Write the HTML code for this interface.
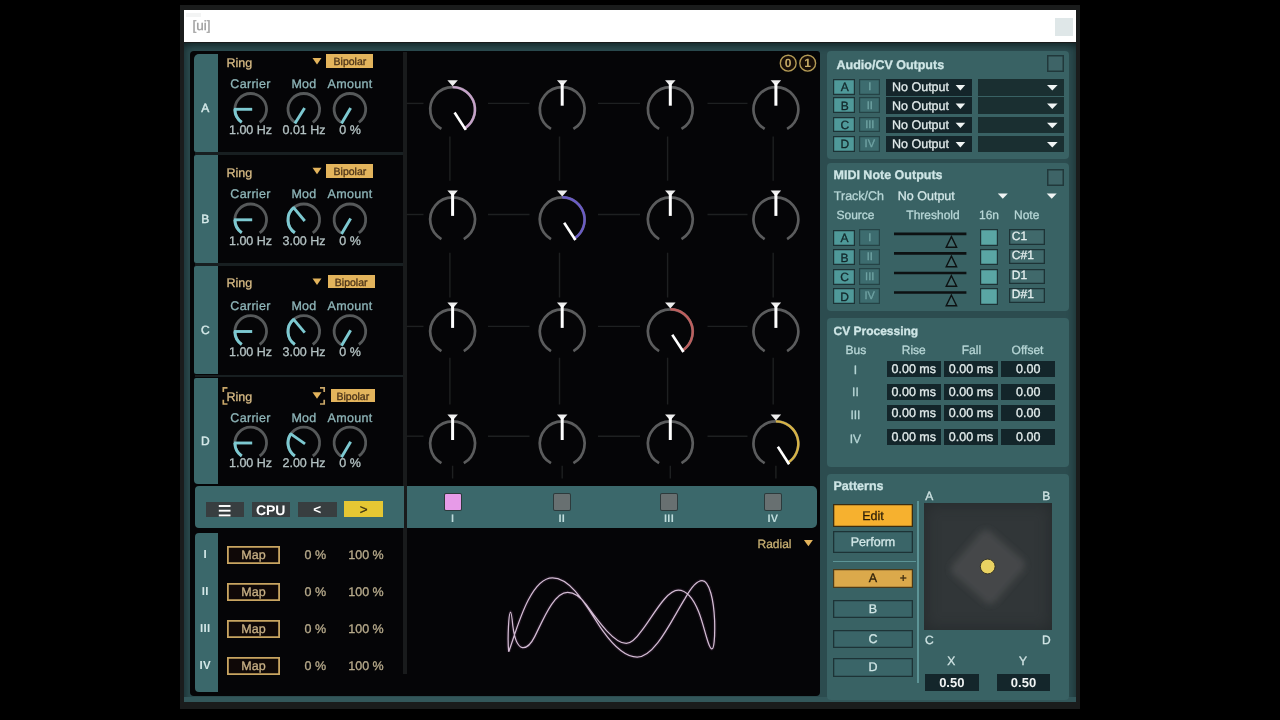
<!DOCTYPE html>
<html><head><meta charset="utf-8"><title>ui</title>
<style>
html,body{margin:0;padding:0;background:#000;}
body{width:1280px;height:720px;position:relative;overflow:hidden;font-family:"Liberation Sans",sans-serif;}
#r div,#r span{position:absolute;display:block;box-sizing:border-box;white-space:nowrap;}
#r svg{position:absolute;left:0;top:0;pointer-events:none;}
#r span{-webkit-text-stroke:0.3px currentColor;-webkit-font-smoothing:antialiased;text-rendering:geometricPrecision;}
#tx{position:absolute;left:0;top:0;width:1280px;height:720px;will-change:transform;transform:translateZ(0);}
</style></head><body><div id="r">
<div style="left:180.0px;top:5.0px;width:900.0px;height:704.0px;background:#1a1c1c;"></div>
<div style="left:184.0px;top:10.0px;width:892.0px;height:32.0px;background:#ffffff;"></div>
<div style="left:1055.0px;top:18.0px;width:18.0px;height:18.0px;background:#dfe7e8;"></div>
<div style="left:186.3px;top:13.1px;width:14.3px;height:4.4px;background:#f3f4f4;"></div>
<div style="left:184.0px;top:43.0px;width:892.0px;height:658.5px;background:#2c4c4f;box-shadow:inset 0 7px 6px -4px rgba(10,20,22,0.6), inset 7px 0 6px -4px rgba(10,20,22,0.35), inset -7px 0 6px -4px rgba(10,20,22,0.3);"></div>
<div style="left:184.0px;top:696.5px;width:892.0px;height:5.0px;background:#33575a;"></div>
<div style="left:189.6px;top:51.1px;width:630.6px;height:644.6px;background:#050507;border-radius:4px 3px 4px 4px;"></div>
<div style="left:403.0px;top:52.0px;width:3.6px;height:622.0px;background:#191b1c;"></div>
<div style="left:194.2px;top:54.2px;width:23.8px;height:97.8px;background:#3b686b;border-radius:5px 0 0 2px;"></div>
<div style="left:326.4px;top:54.2px;width:47.0px;height:13.6px;background:#e3b45c;"></div>
<div style="left:194.2px;top:155.2px;width:23.8px;height:107.8px;background:#3b686b;border-radius:2px 0 0 2px;"></div>
<div style="left:194.5px;top:152.2px;width:208.5px;height:2.8px;background:#181f21;"></div>
<div style="left:326.4px;top:164.0px;width:47.0px;height:13.6px;background:#e3b45c;"></div>
<div style="left:194.2px;top:266.2px;width:23.8px;height:108.3px;background:#3b686b;border-radius:2px 0 0 2px;"></div>
<div style="left:194.5px;top:263.2px;width:208.5px;height:2.8px;background:#181f21;"></div>
<div style="left:327.7px;top:274.7px;width:47.0px;height:13.6px;background:#e3b45c;"></div>
<div style="left:194.2px;top:377.7px;width:23.8px;height:106.3px;background:#3b686b;border-radius:2px 0 0 4px;"></div>
<div style="left:194.5px;top:374.7px;width:208.5px;height:2.8px;background:#181f21;"></div>
<div style="left:330.9px;top:388.9px;width:43.8px;height:13.6px;background:#e3b45c;"></div>
<div style="left:194.5px;top:486.2px;width:209.0px;height:41.4px;background:#3b686b;border-radius:4px 0 0 4px;"></div>
<div style="left:406.6px;top:485.8px;width:410.8px;height:41.8px;background:#3b686b;border-radius:0 5px 5px 0;"></div>
<div style="left:206.3px;top:501.7px;width:37.5px;height:15.6px;background:#383e40;"></div>
<div style="left:251.7px;top:501.7px;width:38.3px;height:15.6px;background:#383e40;"></div>
<div style="left:298.0px;top:501.7px;width:38.6px;height:15.6px;background:#383e40;"></div>
<div style="left:344.0px;top:500.9px;width:39.3px;height:16.4px;background:#e6c733;"></div>
<div style="left:444.9px;top:494.0px;width:15.8px;height:15.6px;background:#e79be8;box-shadow:0 0 0 1px #2d3a3c;border-radius:1px;"></div>
<div style="left:553.9px;top:494.0px;width:15.8px;height:15.6px;background:#687071;box-shadow:0 0 0 1px #2d3a3c;border-radius:1px;"></div>
<div style="left:661.1px;top:494.0px;width:15.8px;height:15.6px;background:#687071;box-shadow:0 0 0 1px #2d3a3c;border-radius:1px;"></div>
<div style="left:765.1px;top:494.0px;width:15.8px;height:15.6px;background:#687071;box-shadow:0 0 0 1px #2d3a3c;border-radius:1px;"></div>
<div style="left:194.5px;top:533.2px;width:23.5px;height:159.0px;background:#3b686b;border-radius:4px 0 0 4px;"></div>
<div style="left:227.3px;top:546.3px;width:52.5px;height:17.8px;background:#0f0807;box-shadow:inset 0 0 0 1.8px #c9a561;"></div>
<div style="left:227.3px;top:583.3px;width:52.5px;height:17.8px;background:#0f0807;box-shadow:inset 0 0 0 1.8px #c9a561;"></div>
<div style="left:227.3px;top:620.3px;width:52.5px;height:17.8px;background:#0f0807;box-shadow:inset 0 0 0 1.8px #c9a561;"></div>
<div style="left:227.3px;top:657.3px;width:52.5px;height:17.8px;background:#0f0807;box-shadow:inset 0 0 0 1.8px #c9a561;"></div>
<div style="left:827.3px;top:51.0px;width:242.2px;height:107.7px;background:#396264;border-radius:4px;"></div>
<div style="left:827.3px;top:163.4px;width:242.2px;height:148.1px;background:#396264;border-radius:4px;"></div>
<div style="left:827.3px;top:318.3px;width:242.2px;height:148.3px;background:#396264;border-radius:4px;"></div>
<div style="left:827.3px;top:473.6px;width:242.2px;height:226.9px;background:#396264;border-radius:4px;"></div>
<div style="left:1047.0px;top:55.0px;width:16.8px;height:16.8px;background:#3e6467;box-shadow:inset 0 0 0 1.5px #21383b;"></div>
<div style="left:833.3px;top:78.9px;width:21.8px;height:15.8px;background:#4f9999;box-shadow:inset 0 0 0 1.2px #1d3336;"></div>
<div style="left:859.2px;top:78.9px;width:21.1px;height:15.8px;background:#3d6c6f;box-shadow:inset 0 0 0 1.2px #254346;"></div>
<div style="left:886.0px;top:78.8px;width:86.0px;height:17.6px;background:#14252a;"></div>
<div style="left:978.0px;top:78.8px;width:85.7px;height:17.6px;background:#1a2f31;"></div>
<div style="left:833.3px;top:97.4px;width:21.8px;height:15.8px;background:#4f9999;box-shadow:inset 0 0 0 1.2px #1d3336;"></div>
<div style="left:859.2px;top:97.4px;width:21.1px;height:15.8px;background:#3d6c6f;box-shadow:inset 0 0 0 1.2px #254346;"></div>
<div style="left:886.0px;top:97.3px;width:86.0px;height:16.8px;background:#14252a;"></div>
<div style="left:978.0px;top:97.3px;width:85.7px;height:16.8px;background:#1a2f31;"></div>
<div style="left:833.3px;top:116.6px;width:21.8px;height:15.8px;background:#4f9999;box-shadow:inset 0 0 0 1.2px #1d3336;"></div>
<div style="left:859.2px;top:116.6px;width:21.1px;height:15.8px;background:#3d6c6f;box-shadow:inset 0 0 0 1.2px #254346;"></div>
<div style="left:886.0px;top:116.5px;width:86.0px;height:16.3px;background:#14252a;"></div>
<div style="left:978.0px;top:116.5px;width:85.7px;height:16.3px;background:#1a2f31;"></div>
<div style="left:833.3px;top:135.9px;width:21.8px;height:15.8px;background:#4f9999;box-shadow:inset 0 0 0 1.2px #1d3336;"></div>
<div style="left:859.2px;top:135.9px;width:21.1px;height:15.8px;background:#3d6c6f;box-shadow:inset 0 0 0 1.2px #254346;"></div>
<div style="left:886.0px;top:135.8px;width:86.0px;height:16.4px;background:#14252a;"></div>
<div style="left:978.0px;top:135.8px;width:85.7px;height:16.4px;background:#1a2f31;"></div>
<div style="left:1047.0px;top:169.2px;width:16.8px;height:16.8px;background:#3e6467;box-shadow:inset 0 0 0 1.5px #21383b;"></div>
<div style="left:833.3px;top:229.5px;width:22.0px;height:16.2px;background:#4f9999;box-shadow:inset 0 0 0 1.2px #1d3336;"></div>
<div style="left:858.9px;top:229.2px;width:21.3px;height:16.5px;background:#3d6c6f;box-shadow:inset 0 0 0 1.2px #254346;"></div>
<div style="left:980.4px;top:229.4px;width:17.4px;height:16.6px;background:#5aa6a4;box-shadow:inset 0 0 0 1.2px #1d3336;"></div>
<div style="left:1008.9px;top:229.4px;width:35.8px;height:15.4px;background:#40696b;box-shadow:inset 0 0 0 1.3px #1d3336;"></div>
<div style="left:833.3px;top:249.0px;width:22.0px;height:16.2px;background:#4f9999;box-shadow:inset 0 0 0 1.2px #1d3336;"></div>
<div style="left:858.9px;top:248.7px;width:21.3px;height:16.5px;background:#3d6c6f;box-shadow:inset 0 0 0 1.2px #254346;"></div>
<div style="left:980.4px;top:248.9px;width:17.4px;height:16.6px;background:#5aa6a4;box-shadow:inset 0 0 0 1.2px #1d3336;"></div>
<div style="left:1008.9px;top:248.9px;width:35.8px;height:15.4px;background:#40696b;box-shadow:inset 0 0 0 1.3px #1d3336;"></div>
<div style="left:833.3px;top:268.6px;width:22.0px;height:16.2px;background:#4f9999;box-shadow:inset 0 0 0 1.2px #1d3336;"></div>
<div style="left:858.9px;top:268.3px;width:21.3px;height:16.5px;background:#3d6c6f;box-shadow:inset 0 0 0 1.2px #254346;"></div>
<div style="left:980.4px;top:268.5px;width:17.4px;height:16.6px;background:#5aa6a4;box-shadow:inset 0 0 0 1.2px #1d3336;"></div>
<div style="left:1008.9px;top:268.5px;width:35.8px;height:15.4px;background:#40696b;box-shadow:inset 0 0 0 1.3px #1d3336;"></div>
<div style="left:833.3px;top:288.1px;width:22.0px;height:16.2px;background:#4f9999;box-shadow:inset 0 0 0 1.2px #1d3336;"></div>
<div style="left:858.9px;top:287.8px;width:21.3px;height:16.5px;background:#3d6c6f;box-shadow:inset 0 0 0 1.2px #254346;"></div>
<div style="left:980.4px;top:288.0px;width:17.4px;height:16.6px;background:#5aa6a4;box-shadow:inset 0 0 0 1.2px #1d3336;"></div>
<div style="left:1008.9px;top:288.0px;width:35.8px;height:15.4px;background:#40696b;box-shadow:inset 0 0 0 1.3px #1d3336;"></div>
<div style="left:886.8px;top:361.0px;width:54.1px;height:16.0px;background:#13252a;"></div>
<div style="left:944.4px;top:361.0px;width:53.4px;height:16.0px;background:#13252a;"></div>
<div style="left:1001.1px;top:361.0px;width:54.1px;height:16.0px;background:#13252a;"></div>
<div style="left:886.8px;top:384.0px;width:54.1px;height:16.0px;background:#13252a;"></div>
<div style="left:944.4px;top:384.0px;width:53.4px;height:16.0px;background:#13252a;"></div>
<div style="left:1001.1px;top:384.0px;width:54.1px;height:16.0px;background:#13252a;"></div>
<div style="left:886.8px;top:405.0px;width:54.1px;height:16.0px;background:#13252a;"></div>
<div style="left:944.4px;top:405.0px;width:53.4px;height:16.0px;background:#13252a;"></div>
<div style="left:1001.1px;top:405.0px;width:54.1px;height:16.0px;background:#13252a;"></div>
<div style="left:886.8px;top:429.0px;width:54.1px;height:16.0px;background:#13252a;"></div>
<div style="left:944.4px;top:429.0px;width:53.4px;height:16.0px;background:#13252a;"></div>
<div style="left:1001.1px;top:429.0px;width:54.1px;height:16.0px;background:#13252a;"></div>
<div style="left:833.2px;top:504.2px;width:79.8px;height:22.5px;background:#f6b12f;box-shadow:inset 0 0 0 1.3px #3b2c10;"></div>
<div style="left:833.2px;top:531.3px;width:79.8px;height:21.5px;background:#3a6568;box-shadow:inset 0 0 0 1.3px #1d3336;"></div>
<div style="left:833.0px;top:560.6px;width:83.0px;height:1.7px;background:#5d9496;"></div>
<div style="left:917.3px;top:500.7px;width:1.8px;height:182.5px;background:#5d9496;"></div>
<div style="left:832.8px;top:569.0px;width:80.5px;height:18.5px;background:#dba94b;box-shadow:inset 0 0 0 1.2px #4b3a18;"></div>
<div style="left:832.8px;top:599.6px;width:80.5px;height:18.5px;background:#3a6568;box-shadow:inset 0 0 0 1.3px #1d3336;"></div>
<div style="left:832.8px;top:629.8px;width:80.5px;height:18.5px;background:#3a6568;box-shadow:inset 0 0 0 1.3px #1d3336;"></div>
<div style="left:832.8px;top:658.0px;width:80.5px;height:18.5px;background:#3a6568;box-shadow:inset 0 0 0 1.3px #1d3336;"></div>
<div style="left:924.2px;top:503.2px;width:127.7px;height:126.6px;background:#313638;box-shadow:inset 0 0 14px 2px rgba(30,34,36,0.55);"></div>
<div style="left:924.8px;top:673.6px;width:54.0px;height:17.4px;background:#14262b;"></div>
<div style="left:996.8px;top:673.6px;width:53.5px;height:17.4px;background:#14262b;"></div>
<svg width="1280" height="720" viewBox="0 0 1280 720">
<path d="M312.50,58.00 L321.50,58.00 L317.00,64.50 Z" fill="#e3b45c"/>
<path d="M241.75,122.32 A15.8,15.8 0 1 1 259.65,122.32" fill="none" stroke="#56595a" stroke-width="2.8" stroke-linecap="butt"/>
<path d="M294.85,122.32 A15.8,15.8 0 1 1 312.75,122.32" fill="none" stroke="#56595a" stroke-width="2.8" stroke-linecap="butt"/>
<path d="M340.95,122.32 A15.8,15.8 0 1 1 358.85,122.32" fill="none" stroke="#56595a" stroke-width="2.8" stroke-linecap="butt"/>
<path d="M241.75,122.32 A15.8,15.8 0 0 1 234.90,109.30" fill="none" stroke="#7dc9d1" stroke-width="3.0" stroke-linecap="butt"/>
<line x1="252.20" y1="109.30" x2="233.90" y2="109.30" stroke="#7dc9d1" stroke-width="2.9" stroke-linecap="butt"/>
<line x1="304.59" y1="108.03" x2="294.90" y2="123.55" stroke="#7dc9d1" stroke-width="2.9" stroke-linecap="butt"/>
<line x1="350.66" y1="108.01" x2="341.47" y2="123.60" stroke="#7dc9d1" stroke-width="2.9" stroke-linecap="butt"/>
<path d="M312.50,167.80 L321.50,167.80 L317.00,174.30 Z" fill="#e3b45c"/>
<path d="M241.75,232.82 A15.8,15.8 0 1 1 259.65,232.82" fill="none" stroke="#56595a" stroke-width="2.8" stroke-linecap="butt"/>
<path d="M294.85,232.82 A15.8,15.8 0 1 1 312.75,232.82" fill="none" stroke="#56595a" stroke-width="2.8" stroke-linecap="butt"/>
<path d="M340.95,232.82 A15.8,15.8 0 1 1 358.85,232.82" fill="none" stroke="#56595a" stroke-width="2.8" stroke-linecap="butt"/>
<path d="M241.75,232.82 A15.8,15.8 0 0 1 234.90,219.80" fill="none" stroke="#7dc9d1" stroke-width="3.0" stroke-linecap="butt"/>
<line x1="252.20" y1="219.80" x2="233.90" y2="219.80" stroke="#7dc9d1" stroke-width="2.9" stroke-linecap="butt"/>
<path d="M294.85,232.82 A15.8,15.8 0 0 1 293.64,207.70" fill="none" stroke="#7dc9d1" stroke-width="3.0" stroke-linecap="butt"/>
<line x1="304.76" y1="220.95" x2="293.00" y2="206.93" stroke="#7dc9d1" stroke-width="2.9" stroke-linecap="butt"/>
<line x1="350.66" y1="218.51" x2="341.47" y2="234.10" stroke="#7dc9d1" stroke-width="2.9" stroke-linecap="butt"/>
<path d="M312.50,278.50 L321.50,278.50 L317.00,285.00 Z" fill="#e3b45c"/>
<path d="M241.75,344.52 A15.8,15.8 0 1 1 259.65,344.52" fill="none" stroke="#56595a" stroke-width="2.8" stroke-linecap="butt"/>
<path d="M294.85,344.52 A15.8,15.8 0 1 1 312.75,344.52" fill="none" stroke="#56595a" stroke-width="2.8" stroke-linecap="butt"/>
<path d="M340.95,344.52 A15.8,15.8 0 1 1 358.85,344.52" fill="none" stroke="#56595a" stroke-width="2.8" stroke-linecap="butt"/>
<path d="M241.75,344.52 A15.8,15.8 0 0 1 234.90,331.50" fill="none" stroke="#7dc9d1" stroke-width="3.0" stroke-linecap="butt"/>
<line x1="252.20" y1="331.50" x2="233.90" y2="331.50" stroke="#7dc9d1" stroke-width="2.9" stroke-linecap="butt"/>
<path d="M294.85,344.52 A15.8,15.8 0 0 1 293.64,319.40" fill="none" stroke="#7dc9d1" stroke-width="3.0" stroke-linecap="butt"/>
<line x1="304.76" y1="332.65" x2="293.00" y2="318.63" stroke="#7dc9d1" stroke-width="2.9" stroke-linecap="butt"/>
<line x1="350.66" y1="330.21" x2="341.47" y2="345.80" stroke="#7dc9d1" stroke-width="2.9" stroke-linecap="butt"/>
<path d="M312.50,392.20 L321.50,392.20 L317.00,398.70 Z" fill="#e3b45c"/>
<path d="M241.75,456.02 A15.8,15.8 0 1 1 259.65,456.02" fill="none" stroke="#56595a" stroke-width="2.8" stroke-linecap="butt"/>
<path d="M294.85,456.02 A15.8,15.8 0 1 1 312.75,456.02" fill="none" stroke="#56595a" stroke-width="2.8" stroke-linecap="butt"/>
<path d="M340.95,456.02 A15.8,15.8 0 1 1 358.85,456.02" fill="none" stroke="#56595a" stroke-width="2.8" stroke-linecap="butt"/>
<path d="M241.75,456.02 A15.8,15.8 0 0 1 234.90,443.00" fill="none" stroke="#7dc9d1" stroke-width="3.0" stroke-linecap="butt"/>
<line x1="252.20" y1="443.00" x2="233.90" y2="443.00" stroke="#7dc9d1" stroke-width="2.9" stroke-linecap="butt"/>
<path d="M294.85,456.02 A15.8,15.8 0 0 1 290.86,433.94" fill="none" stroke="#7dc9d1" stroke-width="3.0" stroke-linecap="butt"/>
<line x1="305.03" y1="443.86" x2="290.04" y2="433.36" stroke="#7dc9d1" stroke-width="2.9" stroke-linecap="butt"/>
<line x1="350.66" y1="441.71" x2="341.47" y2="457.30" stroke="#7dc9d1" stroke-width="2.9" stroke-linecap="butt"/>
<path d="M227.5,387.8 L223.3,387.8 L223.3,392.0" fill="none" stroke="#c9a768" stroke-width="1.7"/>
<path d="M320.0,387.8 L324.2,387.8 L324.2,392.0" fill="none" stroke="#c9a768" stroke-width="1.7"/>
<path d="M227.5,404 L223.3,404 L223.3,399.8" fill="none" stroke="#c9a768" stroke-width="1.7"/>
<path d="M320.0,404 L324.2,404 L324.2,399.8" fill="none" stroke="#c9a768" stroke-width="1.7"/>
<line x1="406.60" y1="103.40" x2="423.50" y2="103.40" stroke="#1e2021" stroke-width="1.4" stroke-linecap="butt"/>
<line x1="488.00" y1="103.40" x2="529.50" y2="103.40" stroke="#1e2021" stroke-width="1.4" stroke-linecap="butt"/>
<line x1="598.00" y1="103.40" x2="640.00" y2="103.40" stroke="#1e2021" stroke-width="1.4" stroke-linecap="butt"/>
<line x1="707.50" y1="103.40" x2="747.50" y2="103.40" stroke="#1e2021" stroke-width="1.4" stroke-linecap="butt"/>
<line x1="449.90" y1="136.50" x2="449.90" y2="180.70" stroke="#1e2021" stroke-width="1.4" stroke-linecap="butt"/>
<path d="M441.40,128.90 A22.4,22.4 0 1 1 463.80,128.90" fill="none" stroke="#5b5c5d" stroke-width="2.7" stroke-linecap="butt"/>
<path d="M447.35,80.30 L457.85,80.30 L452.60,86.30 Z" fill="#ededed"/>
<path d="M452.60,87.10 A22.4,22.4 0 0 1 463.80,128.90" fill="none" stroke="#c5a2c8" stroke-width="2.4" stroke-linecap="butt"/>
<line x1="454.56" y1="112.52" x2="465.83" y2="129.88" stroke="#ffffff" stroke-width="2.6" stroke-linecap="butt"/>
<line x1="559.50" y1="136.50" x2="559.50" y2="180.70" stroke="#1e2021" stroke-width="1.4" stroke-linecap="butt"/>
<path d="M551.00,128.90 A22.4,22.4 0 1 1 573.40,128.90" fill="none" stroke="#5b5c5d" stroke-width="2.7" stroke-linecap="butt"/>
<path d="M556.95,80.30 L567.45,80.30 L562.20,86.30 Z" fill="#ededed"/>
<line x1="562.20" y1="83.00" x2="562.20" y2="105.70" stroke="#ffffff" stroke-width="3.0" stroke-linecap="butt"/>
<line x1="667.60" y1="136.50" x2="667.60" y2="180.70" stroke="#1e2021" stroke-width="1.4" stroke-linecap="butt"/>
<path d="M659.10,128.90 A22.4,22.4 0 1 1 681.50,128.90" fill="none" stroke="#5b5c5d" stroke-width="2.7" stroke-linecap="butt"/>
<path d="M665.05,80.30 L675.55,80.30 L670.30,86.30 Z" fill="#ededed"/>
<line x1="670.30" y1="83.00" x2="670.30" y2="105.70" stroke="#ffffff" stroke-width="3.0" stroke-linecap="butt"/>
<line x1="773.20" y1="136.50" x2="773.20" y2="180.70" stroke="#1e2021" stroke-width="1.4" stroke-linecap="butt"/>
<path d="M764.70,128.90 A22.4,22.4 0 1 1 787.10,128.90" fill="none" stroke="#5b5c5d" stroke-width="2.7" stroke-linecap="butt"/>
<path d="M770.65,80.30 L781.15,80.30 L775.90,86.30 Z" fill="#ededed"/>
<line x1="775.90" y1="83.00" x2="775.90" y2="105.70" stroke="#ffffff" stroke-width="3.0" stroke-linecap="butt"/>
<line x1="406.60" y1="214.50" x2="423.50" y2="214.50" stroke="#1e2021" stroke-width="1.4" stroke-linecap="butt"/>
<line x1="488.00" y1="214.50" x2="529.50" y2="214.50" stroke="#1e2021" stroke-width="1.4" stroke-linecap="butt"/>
<line x1="598.00" y1="214.50" x2="640.00" y2="214.50" stroke="#1e2021" stroke-width="1.4" stroke-linecap="butt"/>
<line x1="707.50" y1="214.50" x2="747.50" y2="214.50" stroke="#1e2021" stroke-width="1.4" stroke-linecap="butt"/>
<line x1="449.90" y1="252.70" x2="449.90" y2="297.50" stroke="#1e2021" stroke-width="1.4" stroke-linecap="butt"/>
<path d="M441.40,239.10 A22.4,22.4 0 1 1 463.80,239.10" fill="none" stroke="#5b5c5d" stroke-width="2.7" stroke-linecap="butt"/>
<path d="M447.35,190.50 L457.85,190.50 L452.60,196.50 Z" fill="#ededed"/>
<line x1="452.60" y1="193.20" x2="452.60" y2="215.90" stroke="#ffffff" stroke-width="3.0" stroke-linecap="butt"/>
<line x1="559.50" y1="252.70" x2="559.50" y2="297.50" stroke="#1e2021" stroke-width="1.4" stroke-linecap="butt"/>
<path d="M551.00,239.10 A22.4,22.4 0 1 1 573.40,239.10" fill="none" stroke="#5b5c5d" stroke-width="2.7" stroke-linecap="butt"/>
<path d="M556.95,190.50 L567.45,190.50 L562.20,196.50 Z" fill="#ededed"/>
<path d="M562.20,197.30 A22.4,22.4 0 0 1 573.40,239.10" fill="none" stroke="#6a5cc4" stroke-width="2.4" stroke-linecap="butt"/>
<line x1="564.16" y1="222.72" x2="575.43" y2="240.08" stroke="#ffffff" stroke-width="2.6" stroke-linecap="butt"/>
<line x1="667.60" y1="252.70" x2="667.60" y2="297.50" stroke="#1e2021" stroke-width="1.4" stroke-linecap="butt"/>
<path d="M659.10,239.10 A22.4,22.4 0 1 1 681.50,239.10" fill="none" stroke="#5b5c5d" stroke-width="2.7" stroke-linecap="butt"/>
<path d="M665.05,190.50 L675.55,190.50 L670.30,196.50 Z" fill="#ededed"/>
<line x1="670.30" y1="193.20" x2="670.30" y2="215.90" stroke="#ffffff" stroke-width="3.0" stroke-linecap="butt"/>
<line x1="773.20" y1="252.70" x2="773.20" y2="297.50" stroke="#1e2021" stroke-width="1.4" stroke-linecap="butt"/>
<path d="M764.70,239.10 A22.4,22.4 0 1 1 787.10,239.10" fill="none" stroke="#5b5c5d" stroke-width="2.7" stroke-linecap="butt"/>
<path d="M770.65,190.50 L781.15,190.50 L775.90,196.50 Z" fill="#ededed"/>
<line x1="775.90" y1="193.20" x2="775.90" y2="215.90" stroke="#ffffff" stroke-width="3.0" stroke-linecap="butt"/>
<line x1="406.60" y1="326.40" x2="423.50" y2="326.40" stroke="#1e2021" stroke-width="1.4" stroke-linecap="butt"/>
<line x1="488.00" y1="326.40" x2="529.50" y2="326.40" stroke="#1e2021" stroke-width="1.4" stroke-linecap="butt"/>
<line x1="598.00" y1="326.40" x2="640.00" y2="326.40" stroke="#1e2021" stroke-width="1.4" stroke-linecap="butt"/>
<line x1="707.50" y1="326.40" x2="747.50" y2="326.40" stroke="#1e2021" stroke-width="1.4" stroke-linecap="butt"/>
<line x1="449.90" y1="357.70" x2="449.90" y2="404.50" stroke="#1e2021" stroke-width="1.4" stroke-linecap="butt"/>
<path d="M441.40,351.10 A22.4,22.4 0 1 1 463.80,351.10" fill="none" stroke="#5b5c5d" stroke-width="2.7" stroke-linecap="butt"/>
<path d="M447.35,302.50 L457.85,302.50 L452.60,308.50 Z" fill="#ededed"/>
<line x1="452.60" y1="305.20" x2="452.60" y2="327.90" stroke="#ffffff" stroke-width="3.0" stroke-linecap="butt"/>
<line x1="559.50" y1="357.70" x2="559.50" y2="404.50" stroke="#1e2021" stroke-width="1.4" stroke-linecap="butt"/>
<path d="M551.00,351.10 A22.4,22.4 0 1 1 573.40,351.10" fill="none" stroke="#5b5c5d" stroke-width="2.7" stroke-linecap="butt"/>
<path d="M556.95,302.50 L567.45,302.50 L562.20,308.50 Z" fill="#ededed"/>
<line x1="562.20" y1="305.20" x2="562.20" y2="327.90" stroke="#ffffff" stroke-width="3.0" stroke-linecap="butt"/>
<line x1="667.60" y1="357.70" x2="667.60" y2="404.50" stroke="#1e2021" stroke-width="1.4" stroke-linecap="butt"/>
<path d="M659.10,351.10 A22.4,22.4 0 1 1 681.50,351.10" fill="none" stroke="#5b5c5d" stroke-width="2.7" stroke-linecap="butt"/>
<path d="M665.05,302.50 L675.55,302.50 L670.30,308.50 Z" fill="#ededed"/>
<path d="M670.30,309.30 A22.4,22.4 0 0 1 681.50,351.10" fill="none" stroke="#bd5f5e" stroke-width="2.4" stroke-linecap="butt"/>
<line x1="672.26" y1="334.72" x2="683.53" y2="352.08" stroke="#ffffff" stroke-width="2.6" stroke-linecap="butt"/>
<line x1="773.20" y1="357.70" x2="773.20" y2="404.50" stroke="#1e2021" stroke-width="1.4" stroke-linecap="butt"/>
<path d="M764.70,351.10 A22.4,22.4 0 1 1 787.10,351.10" fill="none" stroke="#5b5c5d" stroke-width="2.7" stroke-linecap="butt"/>
<path d="M770.65,302.50 L781.15,302.50 L775.90,308.50 Z" fill="#ededed"/>
<line x1="775.90" y1="305.20" x2="775.90" y2="327.90" stroke="#ffffff" stroke-width="3.0" stroke-linecap="butt"/>
<line x1="406.60" y1="436.20" x2="423.50" y2="436.20" stroke="#1e2021" stroke-width="1.4" stroke-linecap="butt"/>
<line x1="488.00" y1="436.20" x2="529.50" y2="436.20" stroke="#1e2021" stroke-width="1.4" stroke-linecap="butt"/>
<line x1="598.00" y1="436.20" x2="640.00" y2="436.20" stroke="#1e2021" stroke-width="1.4" stroke-linecap="butt"/>
<line x1="707.50" y1="436.20" x2="747.50" y2="436.20" stroke="#1e2021" stroke-width="1.4" stroke-linecap="butt"/>
<line x1="452.60" y1="465.70" x2="452.60" y2="478.50" stroke="#1e2021" stroke-width="1.4" stroke-linecap="butt"/>
<path d="M441.40,463.20 A22.4,22.4 0 1 1 463.80,463.20" fill="none" stroke="#5b5c5d" stroke-width="2.7" stroke-linecap="butt"/>
<path d="M447.35,414.60 L457.85,414.60 L452.60,420.60 Z" fill="#ededed"/>
<line x1="452.60" y1="417.30" x2="452.60" y2="440.00" stroke="#ffffff" stroke-width="3.0" stroke-linecap="butt"/>
<line x1="562.20" y1="465.70" x2="562.20" y2="478.50" stroke="#1e2021" stroke-width="1.4" stroke-linecap="butt"/>
<path d="M551.00,463.20 A22.4,22.4 0 1 1 573.40,463.20" fill="none" stroke="#5b5c5d" stroke-width="2.7" stroke-linecap="butt"/>
<path d="M556.95,414.60 L567.45,414.60 L562.20,420.60 Z" fill="#ededed"/>
<line x1="562.20" y1="417.30" x2="562.20" y2="440.00" stroke="#ffffff" stroke-width="3.0" stroke-linecap="butt"/>
<line x1="670.30" y1="465.70" x2="670.30" y2="478.50" stroke="#1e2021" stroke-width="1.4" stroke-linecap="butt"/>
<path d="M659.10,463.20 A22.4,22.4 0 1 1 681.50,463.20" fill="none" stroke="#5b5c5d" stroke-width="2.7" stroke-linecap="butt"/>
<path d="M665.05,414.60 L675.55,414.60 L670.30,420.60 Z" fill="#ededed"/>
<line x1="670.30" y1="417.30" x2="670.30" y2="440.00" stroke="#ffffff" stroke-width="3.0" stroke-linecap="butt"/>
<line x1="775.90" y1="465.70" x2="775.90" y2="478.50" stroke="#1e2021" stroke-width="1.4" stroke-linecap="butt"/>
<path d="M764.70,463.20 A22.4,22.4 0 1 1 787.10,463.20" fill="none" stroke="#5b5c5d" stroke-width="2.7" stroke-linecap="butt"/>
<path d="M770.65,414.60 L781.15,414.60 L775.90,420.60 Z" fill="#ededed"/>
<path d="M775.90,421.40 A22.4,22.4 0 0 1 787.10,463.20" fill="none" stroke="#d6b346" stroke-width="2.4" stroke-linecap="butt"/>
<line x1="777.86" y1="446.82" x2="789.13" y2="464.18" stroke="#ffffff" stroke-width="2.6" stroke-linecap="butt"/>
<circle cx="788.2" cy="63.2" r="7.9" fill="#170e08" stroke="#b39a55" stroke-width="1.4"/>
<circle cx="807.7" cy="63.2" r="7.9" fill="#170e08" stroke="#b39a55" stroke-width="1.4"/>
<line x1="218.80" y1="506.00" x2="230.50" y2="506.00" stroke="#ffffff" stroke-width="1.9" stroke-linecap="butt"/>
<line x1="218.80" y1="510.70" x2="230.50" y2="510.70" stroke="#ffffff" stroke-width="1.9" stroke-linecap="butt"/>
<line x1="218.80" y1="515.40" x2="230.50" y2="515.40" stroke="#ffffff" stroke-width="1.9" stroke-linecap="butt"/>
<path d="M803.90,540.00 L812.90,540.00 L808.40,546.20 Z" fill="#e3b45c"/>
<g transform="translate(480,530) scale(0.27344)"><path d="M105,445 C130,380 180,175 265,175 C340,175 400,300 450,370 C500,440 540,465 575,465 C640,465 700,330 750,250 C775,205 795,185 812,185 C840,185 855,260 858,330 C860,400 855,435 848,435 C835,435 820,350 800,300 C780,250 755,220 725,220 C680,220 630,320 590,370 C565,405 550,415 535,415 C490,415 430,330 390,275 C365,240 345,228 320,228 C270,228 230,330 200,390 C185,420 170,432 155,430 C135,425 125,390 120,350 C117,320 115,300 112,300 C105,300 100,400 105,445 Z" fill="none" stroke="#7a4a7a" stroke-width="14" opacity="0.18"/><path d="M105,445 C130,380 180,175 265,175 C340,175 400,300 450,370 C500,440 540,465 575,465 C640,465 700,330 750,250 C775,205 795,185 812,185 C840,185 855,260 858,330 C860,400 855,435 848,435 C835,435 820,350 800,300 C780,250 755,220 725,220 C680,220 630,320 590,370 C565,405 550,415 535,415 C490,415 430,330 390,275 C365,240 345,228 320,228 C270,228 230,330 200,390 C185,420 170,432 155,430 C135,425 125,390 120,350 C117,320 115,300 112,300 C105,300 100,400 105,445 Z" fill="none" stroke="#d3bdd4" stroke-width="4.6"/></g>
<path d="M955.60,85.00 L965.20,85.00 L960.40,90.40 Z" fill="#f0f4f4"/>
<path d="M1047.00,85.00 L1057.60,85.00 L1052.30,90.60 Z" fill="#f0f4f4"/>
<path d="M955.60,103.50 L965.20,103.50 L960.40,108.90 Z" fill="#f0f4f4"/>
<path d="M1047.00,103.50 L1057.60,103.50 L1052.30,109.10 Z" fill="#f0f4f4"/>
<path d="M955.60,122.70 L965.20,122.70 L960.40,128.10 Z" fill="#f0f4f4"/>
<path d="M1047.00,122.70 L1057.60,122.70 L1052.30,128.30 Z" fill="#f0f4f4"/>
<path d="M955.60,142.00 L965.20,142.00 L960.40,147.40 Z" fill="#f0f4f4"/>
<path d="M1047.00,142.00 L1057.60,142.00 L1052.30,147.60 Z" fill="#f0f4f4"/>
<path d="M997.80,193.60 L1007.80,193.60 L1002.80,198.80 Z" fill="#f0f4f4"/>
<path d="M1046.70,193.60 L1056.70,193.60 L1051.70,198.80 Z" fill="#f0f4f4"/>
<line x1="894.00" y1="233.90" x2="966.40" y2="233.90" stroke="#0d1112" stroke-width="2.6" stroke-linecap="butt"/>
<path d="M951.4,236.6 L956.6,247.2 L946.2,247.2 Z" fill="#40696b" stroke="#0d1112" stroke-width="1.4" stroke-linejoin="miter"/>
<line x1="894.00" y1="253.40" x2="966.40" y2="253.40" stroke="#0d1112" stroke-width="2.6" stroke-linecap="butt"/>
<path d="M951.4,256.1 L956.6,266.7 L946.2,266.7 Z" fill="#40696b" stroke="#0d1112" stroke-width="1.4" stroke-linejoin="miter"/>
<line x1="894.00" y1="273.00" x2="966.40" y2="273.00" stroke="#0d1112" stroke-width="2.6" stroke-linecap="butt"/>
<path d="M951.4,275.7 L956.6,286.3 L946.2,286.3 Z" fill="#40696b" stroke="#0d1112" stroke-width="1.4" stroke-linejoin="miter"/>
<line x1="894.00" y1="292.50" x2="966.40" y2="292.50" stroke="#0d1112" stroke-width="2.6" stroke-linecap="butt"/>
<path d="M951.4,295.2 L956.6,305.8 L946.2,305.8 Z" fill="#40696b" stroke="#0d1112" stroke-width="1.4" stroke-linejoin="miter"/>
<defs><filter id="bl" x="-30%" y="-30%" width="160%" height="160%"><feGaussianBlur stdDeviation="3"/></filter></defs><g transform="translate(988,567) rotate(41)" filter="url(#bl)"><rect x="-28.5" y="-28.5" width="57" height="57" rx="8" fill="#454749"/></g>
<circle cx="987.7" cy="566.5" r="7.4" fill="#e9d262" stroke="#2b2a20" stroke-width="0.9"/>
</svg>
<div id="tx">
<span style="left:192.6px;top:19.37px;font-size:13.5px;line-height:13.5px;color:#9c9c9c;font-weight:400;">[ui]</span>
<span style="left:205.3px;top:101.54px;font-size:12px;line-height:12px;color:#d4e8e8;font-weight:400;transform:translateX(-50%);-webkit-text-stroke:0.45px #d4e8e8;">A</span>
<span style="left:226.5px;top:56.92px;font-size:12.5px;line-height:12.5px;color:#d8bb85;font-weight:400;">Ring</span>
<span style="left:349.9px;top:57.11px;font-size:10.5px;line-height:10.5px;color:#4a3218;font-weight:400;transform:translateX(-50%);">Bipolar</span>
<span style="left:250.5px;top:77.92px;font-size:12.5px;line-height:12.5px;color:#8fb6b9;font-weight:400;transform:translateX(-50%);letter-spacing:0.3px;">Carrier</span>
<span style="left:304.0px;top:77.92px;font-size:12.5px;line-height:12.5px;color:#8fb6b9;font-weight:400;transform:translateX(-50%);letter-spacing:0.3px;">Mod</span>
<span style="left:350.0px;top:77.92px;font-size:12.5px;line-height:12.5px;color:#8fb6b9;font-weight:400;transform:translateX(-50%);letter-spacing:0.3px;">Amount</span>
<span style="left:250.5px;top:124.22px;font-size:12.5px;line-height:12.5px;color:#b4c2c3;font-weight:400;transform:translateX(-50%);">1.00 Hz</span>
<span style="left:304.0px;top:124.22px;font-size:12.5px;line-height:12.5px;color:#b4c2c3;font-weight:400;transform:translateX(-50%);">0.01 Hz</span>
<span style="left:350.0px;top:124.22px;font-size:12.5px;line-height:12.5px;color:#b4c2c3;font-weight:400;transform:translateX(-50%);">0 %</span>
<span style="left:205.3px;top:212.84px;font-size:12px;line-height:12px;color:#d4e8e8;font-weight:400;transform:translateX(-50%);-webkit-text-stroke:0.45px #d4e8e8;">B</span>
<span style="left:226.5px;top:166.72px;font-size:12.5px;line-height:12.5px;color:#d8bb85;font-weight:400;">Ring</span>
<span style="left:349.9px;top:166.91px;font-size:10.5px;line-height:10.5px;color:#4a3218;font-weight:400;transform:translateX(-50%);">Bipolar</span>
<span style="left:250.5px;top:188.42px;font-size:12.5px;line-height:12.5px;color:#8fb6b9;font-weight:400;transform:translateX(-50%);letter-spacing:0.3px;">Carrier</span>
<span style="left:304.0px;top:188.42px;font-size:12.5px;line-height:12.5px;color:#8fb6b9;font-weight:400;transform:translateX(-50%);letter-spacing:0.3px;">Mod</span>
<span style="left:350.0px;top:188.42px;font-size:12.5px;line-height:12.5px;color:#8fb6b9;font-weight:400;transform:translateX(-50%);letter-spacing:0.3px;">Amount</span>
<span style="left:250.5px;top:234.72px;font-size:12.5px;line-height:12.5px;color:#b4c2c3;font-weight:400;transform:translateX(-50%);">1.00 Hz</span>
<span style="left:304.0px;top:234.72px;font-size:12.5px;line-height:12.5px;color:#b4c2c3;font-weight:400;transform:translateX(-50%);">3.00 Hz</span>
<span style="left:350.0px;top:234.72px;font-size:12.5px;line-height:12.5px;color:#b4c2c3;font-weight:400;transform:translateX(-50%);">0 %</span>
<span style="left:205.3px;top:323.54px;font-size:12px;line-height:12px;color:#d4e8e8;font-weight:400;transform:translateX(-50%);-webkit-text-stroke:0.45px #d4e8e8;">C</span>
<span style="left:226.5px;top:277.42px;font-size:12.5px;line-height:12.5px;color:#d8bb85;font-weight:400;">Ring</span>
<span style="left:351.2px;top:277.61px;font-size:10.5px;line-height:10.5px;color:#4a3218;font-weight:400;transform:translateX(-50%);">Bipolar</span>
<span style="left:250.5px;top:300.12px;font-size:12.5px;line-height:12.5px;color:#8fb6b9;font-weight:400;transform:translateX(-50%);letter-spacing:0.3px;">Carrier</span>
<span style="left:304.0px;top:300.12px;font-size:12.5px;line-height:12.5px;color:#8fb6b9;font-weight:400;transform:translateX(-50%);letter-spacing:0.3px;">Mod</span>
<span style="left:350.0px;top:300.12px;font-size:12.5px;line-height:12.5px;color:#8fb6b9;font-weight:400;transform:translateX(-50%);letter-spacing:0.3px;">Amount</span>
<span style="left:250.5px;top:346.42px;font-size:12.5px;line-height:12.5px;color:#b4c2c3;font-weight:400;transform:translateX(-50%);">1.00 Hz</span>
<span style="left:304.0px;top:346.42px;font-size:12.5px;line-height:12.5px;color:#b4c2c3;font-weight:400;transform:translateX(-50%);">3.00 Hz</span>
<span style="left:350.0px;top:346.42px;font-size:12.5px;line-height:12.5px;color:#b4c2c3;font-weight:400;transform:translateX(-50%);">0 %</span>
<span style="left:205.3px;top:434.54px;font-size:12px;line-height:12px;color:#d4e8e8;font-weight:400;transform:translateX(-50%);-webkit-text-stroke:0.45px #d4e8e8;">D</span>
<span style="left:226.5px;top:390.62px;font-size:12.5px;line-height:12.5px;color:#d8bb85;font-weight:400;">Ring</span>
<span style="left:352.8px;top:391.81px;font-size:10.5px;line-height:10.5px;color:#4a3218;font-weight:400;transform:translateX(-50%);">Bipolar</span>
<span style="left:250.5px;top:411.62px;font-size:12.5px;line-height:12.5px;color:#8fb6b9;font-weight:400;transform:translateX(-50%);letter-spacing:0.3px;">Carrier</span>
<span style="left:304.0px;top:411.62px;font-size:12.5px;line-height:12.5px;color:#8fb6b9;font-weight:400;transform:translateX(-50%);letter-spacing:0.3px;">Mod</span>
<span style="left:350.0px;top:411.62px;font-size:12.5px;line-height:12.5px;color:#8fb6b9;font-weight:400;transform:translateX(-50%);letter-spacing:0.3px;">Amount</span>
<span style="left:250.5px;top:457.32px;font-size:12.5px;line-height:12.5px;color:#b4c2c3;font-weight:400;transform:translateX(-50%);">1.00 Hz</span>
<span style="left:304.0px;top:457.32px;font-size:12.5px;line-height:12.5px;color:#b4c2c3;font-weight:400;transform:translateX(-50%);">2.00 Hz</span>
<span style="left:350.0px;top:457.32px;font-size:12.5px;line-height:12.5px;color:#b4c2c3;font-weight:400;transform:translateX(-50%);">0 %</span>
<span style="left:788.2px;top:57.44px;font-size:12px;line-height:12px;color:#c6ab66;font-weight:700;transform:translateX(-50%);-webkit-text-stroke:0;">0</span>
<span style="left:807.7px;top:57.44px;font-size:12px;line-height:12px;color:#c6ab66;font-weight:700;transform:translateX(-50%);-webkit-text-stroke:0;">1</span>
<span style="left:270.7px;top:503.05px;font-size:14px;line-height:14px;color:#ffffff;font-weight:700;transform:translateX(-50%);-webkit-text-stroke:0;">CPU</span>
<span style="left:317.3px;top:502.87px;font-size:13.5px;line-height:13.5px;color:#ffffff;font-weight:700;transform:translateX(-50%);-webkit-text-stroke:0;">&lt;</span>
<span style="left:363.6px;top:502.87px;font-size:13.5px;line-height:13.5px;color:#3a3010;font-weight:400;transform:translateX(-50%);">&gt;</span>
<span style="left:452.8px;top:514.09px;font-size:11px;line-height:11px;color:#bfdcdc;font-weight:700;transform:translateX(-50%);letter-spacing:0.3px;-webkit-text-stroke:0;">I</span>
<span style="left:561.8px;top:514.09px;font-size:11px;line-height:11px;color:#bfdcdc;font-weight:700;transform:translateX(-50%);letter-spacing:0.3px;-webkit-text-stroke:0;">II</span>
<span style="left:669.0px;top:514.09px;font-size:11px;line-height:11px;color:#bfdcdc;font-weight:700;transform:translateX(-50%);letter-spacing:0.3px;-webkit-text-stroke:0;">III</span>
<span style="left:773.0px;top:514.09px;font-size:11px;line-height:11px;color:#bfdcdc;font-weight:700;transform:translateX(-50%);letter-spacing:0.3px;-webkit-text-stroke:0;">IV</span>
<span style="left:205.3px;top:549.77px;font-size:11.5px;line-height:11.5px;color:#d4e8e8;font-weight:700;transform:translateX(-50%);letter-spacing:0.4px;-webkit-text-stroke:0;">I</span>
<span style="left:253.5px;top:549.02px;font-size:12.5px;line-height:12.5px;color:#c8b085;font-weight:400;transform:translateX(-50%);">Map</span>
<span style="left:315.4px;top:549.02px;font-size:12.5px;line-height:12.5px;color:#b8ab8c;font-weight:400;transform:translateX(-50%);">0 %</span>
<span style="left:366.0px;top:549.02px;font-size:12.5px;line-height:12.5px;color:#b8ab8c;font-weight:400;transform:translateX(-50%);">100 %</span>
<span style="left:205.3px;top:586.77px;font-size:11.5px;line-height:11.5px;color:#d4e8e8;font-weight:700;transform:translateX(-50%);letter-spacing:0.4px;-webkit-text-stroke:0;">II</span>
<span style="left:253.5px;top:586.02px;font-size:12.5px;line-height:12.5px;color:#c8b085;font-weight:400;transform:translateX(-50%);">Map</span>
<span style="left:315.4px;top:586.02px;font-size:12.5px;line-height:12.5px;color:#b8ab8c;font-weight:400;transform:translateX(-50%);">0 %</span>
<span style="left:366.0px;top:586.02px;font-size:12.5px;line-height:12.5px;color:#b8ab8c;font-weight:400;transform:translateX(-50%);">100 %</span>
<span style="left:205.3px;top:623.77px;font-size:11.5px;line-height:11.5px;color:#d4e8e8;font-weight:700;transform:translateX(-50%);letter-spacing:0.4px;-webkit-text-stroke:0;">III</span>
<span style="left:253.5px;top:623.02px;font-size:12.5px;line-height:12.5px;color:#c8b085;font-weight:400;transform:translateX(-50%);">Map</span>
<span style="left:315.4px;top:623.02px;font-size:12.5px;line-height:12.5px;color:#b8ab8c;font-weight:400;transform:translateX(-50%);">0 %</span>
<span style="left:366.0px;top:623.02px;font-size:12.5px;line-height:12.5px;color:#b8ab8c;font-weight:400;transform:translateX(-50%);">100 %</span>
<span style="left:205.3px;top:660.77px;font-size:11.5px;line-height:11.5px;color:#d4e8e8;font-weight:700;transform:translateX(-50%);letter-spacing:0.4px;-webkit-text-stroke:0;">IV</span>
<span style="left:253.5px;top:660.02px;font-size:12.5px;line-height:12.5px;color:#c8b085;font-weight:400;transform:translateX(-50%);">Map</span>
<span style="left:315.4px;top:660.02px;font-size:12.5px;line-height:12.5px;color:#b8ab8c;font-weight:400;transform:translateX(-50%);">0 %</span>
<span style="left:366.0px;top:660.02px;font-size:12.5px;line-height:12.5px;color:#b8ab8c;font-weight:400;transform:translateX(-50%);">100 %</span>
<span style="left:757.5px;top:537.64px;font-size:12px;line-height:12px;color:#c9b173;font-weight:400;">Radial</span>
<span style="left:836.5px;top:59.22px;font-size:12.5px;line-height:12.5px;color:#cfe6e6;font-weight:700;">Audio/CV Outputs</span>
<span style="left:844.8px;top:81.44px;font-size:12px;line-height:12px;color:#13282b;font-weight:400;transform:translateX(-50%);">A</span>
<span style="left:869.8px;top:82.49px;font-size:11px;line-height:11px;color:#70a3a4;font-weight:400;transform:translateX(-50%);">I</span>
<span style="left:892.0px;top:81.02px;font-size:12.5px;line-height:12.5px;color:#e3ecec;font-weight:400;">No Output</span>
<span style="left:844.8px;top:99.94px;font-size:12px;line-height:12px;color:#13282b;font-weight:400;transform:translateX(-50%);">B</span>
<span style="left:869.8px;top:100.99px;font-size:11px;line-height:11px;color:#70a3a4;font-weight:400;transform:translateX(-50%);">II</span>
<span style="left:892.0px;top:99.52px;font-size:12.5px;line-height:12.5px;color:#e3ecec;font-weight:400;">No Output</span>
<span style="left:844.8px;top:119.14px;font-size:12px;line-height:12px;color:#13282b;font-weight:400;transform:translateX(-50%);">C</span>
<span style="left:869.8px;top:120.19px;font-size:11px;line-height:11px;color:#70a3a4;font-weight:400;transform:translateX(-50%);">III</span>
<span style="left:892.0px;top:118.72px;font-size:12.5px;line-height:12.5px;color:#e3ecec;font-weight:400;">No Output</span>
<span style="left:844.8px;top:138.44px;font-size:12px;line-height:12px;color:#13282b;font-weight:400;transform:translateX(-50%);">D</span>
<span style="left:869.8px;top:139.49px;font-size:11px;line-height:11px;color:#70a3a4;font-weight:400;transform:translateX(-50%);">IV</span>
<span style="left:892.0px;top:138.02px;font-size:12.5px;line-height:12.5px;color:#e3ecec;font-weight:400;">No Output</span>
<span style="left:833.5px;top:169.12px;font-size:12.5px;line-height:12.5px;color:#cfe6e6;font-weight:700;">MIDI Note Outputs</span>
<span style="left:833.8px;top:189.62px;font-size:12.5px;line-height:12.5px;color:#b7d6d6;font-weight:400;">Track/Ch</span>
<span style="left:897.8px;top:189.62px;font-size:12.5px;line-height:12.5px;color:#d2e7e7;font-weight:400;">No Output</span>
<span style="left:855.5px;top:208.74px;font-size:12px;line-height:12px;color:#b7d6d6;font-weight:400;transform:translateX(-50%);">Source</span>
<span style="left:933.0px;top:208.74px;font-size:12px;line-height:12px;color:#b7d6d6;font-weight:400;transform:translateX(-50%);">Threshold</span>
<span style="left:989.0px;top:208.74px;font-size:12px;line-height:12px;color:#b7d6d6;font-weight:400;transform:translateX(-50%);">16n</span>
<span style="left:1026.7px;top:208.74px;font-size:12px;line-height:12px;color:#b7d6d6;font-weight:400;transform:translateX(-50%);">Note</span>
<span style="left:844.6px;top:232.04px;font-size:12px;line-height:12px;color:#13282b;font-weight:400;transform:translateX(-50%);">A</span>
<span style="left:869.7px;top:232.89px;font-size:11px;line-height:11px;color:#70a3a4;font-weight:400;transform:translateX(-50%);">I</span>
<span style="left:1011.8px;top:229.84px;font-size:12px;line-height:12px;color:#e3eeee;font-weight:400;">C1</span>
<span style="left:844.6px;top:251.54px;font-size:12px;line-height:12px;color:#13282b;font-weight:400;transform:translateX(-50%);">B</span>
<span style="left:869.7px;top:252.39px;font-size:11px;line-height:11px;color:#70a3a4;font-weight:400;transform:translateX(-50%);">II</span>
<span style="left:1011.8px;top:249.34px;font-size:12px;line-height:12px;color:#e3eeee;font-weight:400;">C#1</span>
<span style="left:844.6px;top:271.14px;font-size:12px;line-height:12px;color:#13282b;font-weight:400;transform:translateX(-50%);">C</span>
<span style="left:869.7px;top:271.99px;font-size:11px;line-height:11px;color:#70a3a4;font-weight:400;transform:translateX(-50%);">III</span>
<span style="left:1011.8px;top:268.94px;font-size:12px;line-height:12px;color:#e3eeee;font-weight:400;">D1</span>
<span style="left:844.6px;top:290.64px;font-size:12px;line-height:12px;color:#13282b;font-weight:400;transform:translateX(-50%);">D</span>
<span style="left:869.7px;top:291.49px;font-size:11px;line-height:11px;color:#70a3a4;font-weight:400;transform:translateX(-50%);">IV</span>
<span style="left:1011.8px;top:288.44px;font-size:12px;line-height:12px;color:#e3eeee;font-weight:400;">D#1</span>
<span style="left:833.5px;top:325.44px;font-size:12px;line-height:12px;color:#cfe6e6;font-weight:700;">CV Processing</span>
<span style="left:855.8px;top:343.84px;font-size:12px;line-height:12px;color:#b7d6d6;font-weight:400;transform:translateX(-50%);">Bus</span>
<span style="left:913.8px;top:343.84px;font-size:12px;line-height:12px;color:#b7d6d6;font-weight:400;transform:translateX(-50%);">Rise</span>
<span style="left:971.4px;top:343.84px;font-size:12px;line-height:12px;color:#b7d6d6;font-weight:400;transform:translateX(-50%);">Fall</span>
<span style="left:1027.5px;top:343.84px;font-size:12px;line-height:12px;color:#b7d6d6;font-weight:400;transform:translateX(-50%);">Offset</span>
<span style="left:855.4px;top:363.64px;font-size:12px;line-height:12px;color:#b7d6d6;font-weight:400;transform:translateX(-50%);">I</span>
<span style="left:913.8px;top:362.82px;font-size:12.5px;line-height:12.5px;color:#e3ecec;font-weight:400;transform:translateX(-50%);">0.00 ms</span>
<span style="left:971.1px;top:362.82px;font-size:12.5px;line-height:12.5px;color:#e3ecec;font-weight:400;transform:translateX(-50%);">0.00 ms</span>
<span style="left:1028.2px;top:362.82px;font-size:12.5px;line-height:12.5px;color:#e3ecec;font-weight:400;transform:translateX(-50%);">0.00</span>
<span style="left:855.4px;top:386.14px;font-size:12px;line-height:12px;color:#b7d6d6;font-weight:400;transform:translateX(-50%);">II</span>
<span style="left:913.8px;top:385.82px;font-size:12.5px;line-height:12.5px;color:#e3ecec;font-weight:400;transform:translateX(-50%);">0.00 ms</span>
<span style="left:971.1px;top:385.82px;font-size:12.5px;line-height:12.5px;color:#e3ecec;font-weight:400;transform:translateX(-50%);">0.00 ms</span>
<span style="left:1028.2px;top:385.82px;font-size:12.5px;line-height:12.5px;color:#e3ecec;font-weight:400;transform:translateX(-50%);">0.00</span>
<span style="left:855.4px;top:409.14px;font-size:12px;line-height:12px;color:#b7d6d6;font-weight:400;transform:translateX(-50%);">III</span>
<span style="left:913.8px;top:406.82px;font-size:12.5px;line-height:12.5px;color:#e3ecec;font-weight:400;transform:translateX(-50%);">0.00 ms</span>
<span style="left:971.1px;top:406.82px;font-size:12.5px;line-height:12.5px;color:#e3ecec;font-weight:400;transform:translateX(-50%);">0.00 ms</span>
<span style="left:1028.2px;top:406.82px;font-size:12.5px;line-height:12.5px;color:#e3ecec;font-weight:400;transform:translateX(-50%);">0.00</span>
<span style="left:855.4px;top:432.84px;font-size:12px;line-height:12px;color:#b7d6d6;font-weight:400;transform:translateX(-50%);">IV</span>
<span style="left:913.8px;top:430.82px;font-size:12.5px;line-height:12.5px;color:#e3ecec;font-weight:400;transform:translateX(-50%);">0.00 ms</span>
<span style="left:971.1px;top:430.82px;font-size:12.5px;line-height:12.5px;color:#e3ecec;font-weight:400;transform:translateX(-50%);">0.00 ms</span>
<span style="left:1028.2px;top:430.82px;font-size:12.5px;line-height:12.5px;color:#e3ecec;font-weight:400;transform:translateX(-50%);">0.00</span>
<span style="left:833.5px;top:479.72px;font-size:12.5px;line-height:12.5px;color:#cfe6e6;font-weight:700;">Patterns</span>
<span style="left:873.0px;top:510.22px;font-size:12.5px;line-height:12.5px;color:#2a1d08;font-weight:400;transform:translateX(-50%);">Edit</span>
<span style="left:873.0px;top:535.72px;font-size:12.5px;line-height:12.5px;color:#d2e7e7;font-weight:400;transform:translateX(-50%);">Perform</span>
<span style="left:873.0px;top:572.02px;font-size:12.5px;line-height:12.5px;color:#2a1d08;font-weight:400;transform:translateX(-50%);">A</span>
<span style="left:903.3px;top:572.24px;font-size:12px;line-height:12px;color:#3a2a10;font-weight:400;transform:translateX(-50%);">+</span>
<span style="left:873.0px;top:602.62px;font-size:12.5px;line-height:12.5px;color:#d2e7e7;font-weight:400;transform:translateX(-50%);">B</span>
<span style="left:873.0px;top:632.82px;font-size:12.5px;line-height:12.5px;color:#d2e7e7;font-weight:400;transform:translateX(-50%);">C</span>
<span style="left:873.0px;top:661.02px;font-size:12.5px;line-height:12.5px;color:#d2e7e7;font-weight:400;transform:translateX(-50%);">D</span>
<span style="left:929.3px;top:489.54px;font-size:12px;line-height:12px;color:#cfe3e3;font-weight:400;transform:translateX(-50%);">A</span>
<span style="left:1046.3px;top:489.54px;font-size:12px;line-height:12px;color:#cfe3e3;font-weight:400;transform:translateX(-50%);">B</span>
<span style="left:929.3px;top:633.64px;font-size:12px;line-height:12px;color:#cfe3e3;font-weight:400;transform:translateX(-50%);">C</span>
<span style="left:1046.3px;top:633.64px;font-size:12px;line-height:12px;color:#cfe3e3;font-weight:400;transform:translateX(-50%);">D</span>
<span style="left:951.2px;top:654.54px;font-size:12px;line-height:12px;color:#cfe3e3;font-weight:400;transform:translateX(-50%);">X</span>
<span style="left:1023.0px;top:654.54px;font-size:12px;line-height:12px;color:#cfe3e3;font-weight:400;transform:translateX(-50%);">Y</span>
<span style="left:951.8px;top:676.00px;font-size:13px;line-height:13px;color:#f0f4f4;font-weight:700;transform:translateX(-50%);-webkit-text-stroke:0;">0.50</span>
<span style="left:1023.5px;top:676.00px;font-size:13px;line-height:13px;color:#f0f4f4;font-weight:700;transform:translateX(-50%);-webkit-text-stroke:0;">0.50</span>
</div>
</div></body></html>
